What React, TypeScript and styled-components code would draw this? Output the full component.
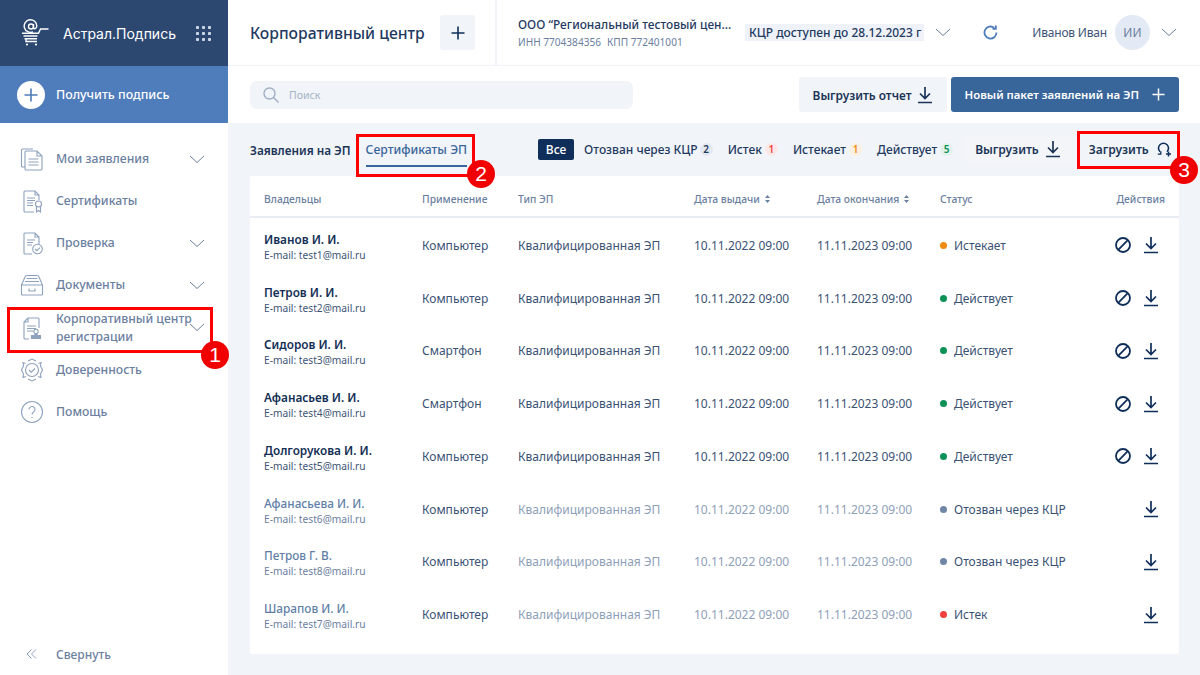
import * as React from 'react'
import styled, {createGlobalStyle} from 'styled-components'

const GlobalStyle = createGlobalStyle`
  html, body {
    margin: 0;
    padding: 0;
    height: 675px;
    overflow: hidden;
    background: #f1f4f9;
    font-family: "Noto Sans", "Open Sans", sans-serif;
    color: #1c3557;
  }
  * { box-sizing: border-box; }
`

const Page = styled.div`
  position: relative;
  display: grid;
  grid-template-columns: 228px 1fr;
  width: 1200px;
  height: 675px;
`

const Sidebar = styled.aside`
  display: flex;
  flex-direction: column;
  background: #fff;
`

const Brand = styled.div`
  display: flex;
  align-items: center;
  height: 66px;
  padding: 0 17px 0 21px;
  background: #2c4770;
  color: #fff;
  font-family: "Inter", sans-serif;
  font-size: 14px;
  span { margin-left: 14px; flex: 1; }
`

const GetButton = styled.div`
  display: flex;
  align-items: center;
  gap: 11px;
  height: 57px;
  padding-left: 17px;
  background: #4f7cba;
  color: #fff;
  font-size: 12.4px;
  font-weight: 500;
`

const PlusCircle = styled.div`
  display: flex;
  align-items: center;
  justify-content: center;
  width: 28px;
  height: 28px;
  border-radius: 50%;
  background: #fff;
  color: #4f7cba;
`

const Nav = styled.nav`
  display: flex;
  flex-direction: column;
  padding-top: 15px;
  flex: 1;
`

const NavItem = styled.div`
  position: relative;
  display: grid;
  grid-template-columns: 24px minmax(0, 1fr) 16px;
  align-items: center;
  column-gap: 12px;
  height: 42.15px;
  padding: 0 23px 0 20px;
  color: #6b80a0;
  font-size: 12.2px;
  font-weight: 500;
  line-height: 18px;
  svg { display: block; }
`

const NavLabel = styled.span`
  white-space: nowrap;
`

const Collapse = styled.div`
  display: flex;
  align-items: center;
  gap: 19px;
  height: 42px;
  padding-left: 26px;
  color: #6b80a0;
  font-size: 12px;
  font-weight: 500;
`

const Main = styled.main`
  display: flex;
  flex-direction: column;
  min-width: 0;
`

const TopBar = styled.header`
  display: flex;
  align-items: center;
  height: 66px;
  padding-left: 22px;
  background: #fff;
  border-bottom: 1px solid #f1f4f8;
`

const PageTitle = styled.h1`
  margin: 0;
  width: 190px;
  color: #1f3a61;
  font-size: 15.7px;
  font-weight: 500;
  white-space: nowrap;
`

const SquareButton = styled.div`
  display: flex;
  align-items: center;
  justify-content: center;
  width: 35px;
  height: 35px;
  border-radius: 3px;
  background: #f1f4f8;
  color: #0f2f5a;
`

const OrgBlock = styled.div`
  display: flex;
  flex-direction: column;
  justify-content: center;
  gap: 3px;
  align-self: stretch;
  width: 250px;
  margin-left: 20px;
  padding-left: 21px;
  border-left: 2px solid #f1f4f8;
`

const OrgName = styled.div`
  color: #1f3a61;
  font-size: 11.9px;
  font-weight: 500;
  white-space: nowrap;
`

const OrgMeta = styled.div`
  display: flex;
  gap: 6px;
  color: #6b80a0;
  font-size: 10.1px;
  white-space: nowrap;
`

const Licence = styled.div`
  display: flex;
  align-items: center;
  height: 17px;
  padding: 0 3px 0 4px;
  background: #eff3f9;
  color: #1f3a61;
  font-size: 12px;
  font-weight: 500;
  white-space: nowrap;
`

const TopChevron = styled.div`
  display: flex;
  margin-left: 11px;
  color: #6b80a0;
`

const Refresh = styled.div`
  display: flex;
  margin-left: 32px;
  color: #4f7cba;
`

const UserName = styled.div`
  margin-left: 34px;
  color: #3d5476;
  font-size: 12px;
  white-space: nowrap;
  letter-spacing: -0.2px;
`

const Avatar = styled.div`
  display: flex;
  align-items: center;
  justify-content: center;
  width: 35px;
  height: 35px;
  margin-left: 8px;
  border-radius: 50%;
  background: #e3eaf5;
  color: #6b80a0;
  font-size: 12px;
`

const Toolbar = styled.div`
  display: flex;
  align-items: center;
  height: 57px;
  padding: 0 21px 0 22px;
  background: #fff;
`

const Search = styled.div`
  display: flex;
  align-items: center;
  gap: 10px;
  width: 383px;
  height: 28px;
  padding-left: 13px;
  border-radius: 7px;
  background: #f1f4f8;
  color: #a5b3c6;
  font-size: 10.5px;
  svg { display: block; }
`

const ToolbarGap = styled.div`
  flex: 1;
`

const ToolButton = styled.div<{$primary?: boolean}>`
  display: flex;
  align-items: center;
  gap: ${p => (p.$primary ? '13px' : '5px')};
  height: 35px;
  margin-left: 4px;
  padding: 0 14px;
  border-radius: 3px;
  background: ${p => (p.$primary ? '#39669a' : '#f1f4f8')};
  color: ${p => (p.$primary ? '#fff' : '#1c3557')};
  font-size: ${p => (p.$primary ? '11.4px' : '11.9px')};
  font-weight: 600;
  white-space: nowrap;
`

const Content = styled.div`
  display: flex;
  flex-direction: column;
  flex: 1;
  padding: 0 21px 21px 22px;
`

const TabsRow = styled.div`
  display: flex;
  align-items: center;
  height: 53px;
`

const Tab = styled.div<{$active?: boolean}>`
  display: flex;
  align-items: center;
  height: 34px;
  margin-right: 15px;
  padding-top: 2px;
  border-bottom: 2px solid ${p => (p.$active ? '#39669a' : 'transparent')};
  color: ${p => (p.$active ? '#39669a' : '#1c3557')};
  font-size: ${p => (p.$active ? '12.2px' : '11.75px')};
  font-weight: ${p => (p.$active ? 500 : 600)};
  white-space: nowrap;
`

const Filters = styled.div`
  display: flex;
  flex: 1;
  align-items: center;
  margin-left: 56px;
  margin-bottom: 1px;
  font-size: 12px;
  font-weight: 500;
  color: #1f3a61;
`

const AllChip = styled.div`
  display: flex;
  align-items: center;
  justify-content: center;
  width: 36px;
  height: 21px;
  border-radius: 2px;
  background: #0f2f5a;
  color: #fff;
  font-size: 12px;
  margin-right: 10px;
`

const Filter = styled.div<{$tight?: boolean}>`
  display: flex;
  align-items: center;
  gap: ${p => (p.$tight ? '2px' : '3px')};
  margin-right: 15px;
  white-space: nowrap;
`

const Count = styled.span<{$bg: string; $fg: string}>`
  display: inline-flex;
  align-items: center;
  justify-content: center;
  width: 13px;
  height: 13px;
  border-radius: 50%;
  background: ${p => p.$bg};
  color: ${p => p.$fg};
  font-size: 10px;
  font-weight: 600;
`

const TabAction = styled.div<{$shaded?: boolean}>`
  display: flex;
  align-items: center;
  gap: ${p => (p.$shaded ? '6px' : '7px')};
  height: 28px;
  margin-left: ${p => (p.$shaded ? '-3px' : '8px')};
  padding: 0 10px;
  border-radius: 3px;
  background: ${p => (p.$shaded ? '#f3f5f9' : 'transparent')};
  color: #1c3557;
  font-size: 12px;
  font-weight: 600;
  white-space: nowrap;
`

const Card = styled.section`
  flex: 1;
  padding: 0 14px;
  background: #fff;
  border-radius: 2px;
`

const Row = styled.div`
  display: grid;
  grid-template-columns: 158px 96px 176px 123px 123px 1fr 50px;
  align-items: center;
  height: 52.75px;
`

const HeadRow = styled(Row)`
  height: 42px;
  margin: 0 -14px 1px;
  padding: 6px 14px 0;
  border-bottom: 2px solid #e8edf4;
`

const HeadCell = styled.div<{$right?: boolean}>`
  display: flex;
  align-items: center;
  gap: 5px;
  color: #6b80a0;
  font-size: 10.3px;
  font-weight: 500;
  white-space: nowrap;
  ${p => (p.$right ? 'justify-content: flex-end;' : '')}
`

const Owner = styled.div<{$muted?: boolean}>`
  display: flex;
  flex-direction: column;
  padding-top: 2px;
  b {
    margin-bottom: 1px;
    color: ${p => (p.$muted ? '#5f7fa6' : '#142f55')};
    font-size: 11.8px;
    font-weight: ${p => (p.$muted ? 500 : 600)};
    line-height: 16px;
  }
  span {
    color: ${p => (p.$muted ? '#6b80a0' : '#3d5476')};
    font-size: 10.2px;
    line-height: 14px;
  }
`

const Cell = styled.div<{$muted?: boolean}>`
  color: ${p => (p.$muted ? '#8ea0b8' : '#3a5274')};
  font-size: 12px;
  white-space: nowrap;
`

const Status = styled.div<{$color: string}>`
  display: flex;
  align-items: center;
  gap: 7px;
  color: #3a5274;
  font-size: 12px;
  white-space: nowrap;
  &::before {
    content: '';
    width: 7px;
    height: 7px;
    border-radius: 50%;
    background: ${p => p.$color};
  }
`

const Actions = styled.div`
  display: flex;
  align-items: center;
  justify-content: flex-end;
  gap: 12px;
  padding-right: 6px;
  color: #0f2f5a;
  svg { display: block; }
`

const Frame = styled.div<{$x: number; $y: number; $w: number; $h: number}>`
  position: absolute;
  left: ${p => p.$x}px;
  top: ${p => p.$y}px;
  width: ${p => p.$w}px;
  height: ${p => p.$h}px;
  border: 3px solid #f00;
  pointer-events: none;
`

const Badge = styled.div<{$x: number; $y: number}>`
  position: absolute;
  left: ${p => p.$x - 14}px;
  top: ${p => p.$y - 14}px;
  display: flex;
  align-items: center;
  justify-content: center;
  width: 28px;
  height: 28px;
  border-radius: 50%;
  background: #f00000;
  color: #fff;
  font-family: "Liberation Sans", sans-serif;
  font-size: 21px;
`

const Chevron = () => (
  <svg width="16" height="9" viewBox="0 0 16 9" fill="none" stroke="currentColor" strokeWidth="1">
    <path d="M1 1l7 6.5L15 1" />
  </svg>
)

const Plus = ({size = 14, w = 1.6}: {size?: number; w?: number}) => (
  <svg width={size} height={size} viewBox="0 0 14 14" fill="none" stroke="currentColor" strokeWidth={w}>
    <path d="M7 0.5v13M0.5 7h13" />
  </svg>
)

const Download = () => (
  <svg width="16" height="18" viewBox="0 0 16 18" fill="none" stroke="currentColor" strokeWidth="1.7">
    <path d="M8 1v11M3 7.5l5 5 5-5M1 16.5h14" />
  </svg>
)

const Ban = () => (
  <svg width="16" height="16" viewBox="0 0 16 16" fill="none" stroke="currentColor" strokeWidth="1.8">
    <circle cx="8" cy="8" r="7" />
    <path d="M3.2 12.8L12.8 3.2" />
  </svg>
)

const Sort = () => (
  <svg width="5" height="8" viewBox="0 0 5 8" fill="#6b80a0">
    <path d="M2.5 0L5 3H0zM2.5 8L0 5h5z" />
  </svg>
)

const Upload = () => (
  <svg width="16" height="16" viewBox="0 0 16 16" fill="none" stroke="#0f2f5a" strokeWidth="1.6">
    <path d="M4 10.8A5 5 0 1 1 11 10.800" />
    <path d="M1.800 13.200h3v-3" strokeWidth="1.300" />
    <path d="M12.500 10.500v5M10 13h5" strokeWidth="1.500" />
  </svg>
)

const iconProps = {
  width: 24,
  height: 24,
  viewBox: '0 0 24 24',
  fill: 'none',
  stroke: '#8ea2bd',
  strokeWidth: 1.1,
}

const DocsIcon = () => (
  <svg {...iconProps}>
    <path d="M5 20H2.500A1 1 0 0 1 1.500 19V3a1 1 0 0 1 1-1H13" />
    <path d="M5 5a1 1 0 0 1 1-1h11l5 5V22a1 1 0 0 1-1 1H6a1 1 0 0 1-1-1zM17 4v5h5" />
    <path d="M8.500 12h10M8.500 15h10M8.500 18h10" />
  </svg>
)

const CertIcon = () => (
  <svg {...iconProps}>
    <path d="M14 23H5a1 1 0 0 1-1-1V3a1 1 0 0 1 1-1h10l4 4v5M15 2v4h4" />
    <path d="M7 9h8M7 11.500h8M7 14h6M7 16.500h6" />
    <circle cx="18.500" cy="15" r="3" />
    <path d="M16.500 18v5l2-1.500 2 1.500v-5" />
  </svg>
)

const CheckDocIcon = () => (
  <svg {...iconProps}>
    <path d="M12 23H5a1 1 0 0 1-1-1V3a1 1 0 0 1 1-1h10l4 4v7M15 2v4h4" />
    <path d="M7 9h8M7 11.500h6M7 14h5" />
    <circle cx="17.500" cy="18" r="4.800" />
    <path d="M15.200 18l1.700 1.700 3-3" />
  </svg>
)

const TrayIcon = () => (
  <svg {...iconProps}>
    <path d="M1.500 12L5 4a2 2 0 0 1 2-1.500h10A2 2 0 0 1 19 4l3.500 8v9a1 1 0 0 1-1 1h-19a1 1 0 0 1-1-1z" />
    <path d="M1.500 12h21M5 8.500h14M6.500 5.500h11M9 15.500v2.500h6v-2.500" />
  </svg>
)

const StampIcon = () => (
  <svg {...iconProps}>
    <path d="M9 23H5a1 1 0 0 1-1-1V6l4-4h10a1 1 0 0 1 1 1v9M8 2v4H4" />
    <path d="M7 10h9M7 12.500h9M7 15h6" />
    <circle cx="16" cy="15.500" r="2.200" />
    <path d="M15 17.500v2h-3.500v3h9v-3H17v-2" fill="#8ea2bd" />
  </svg>
)

const TrustIcon = () => (
  <svg {...iconProps}>
    <circle cx="12" cy="12" r="6.500" />
    <path d="M9 12l2.200 2.200L15 10.500" />
    <path d="M5.500 5.500L3 4.500l.5 3.500L1.500 12l2 4-.5 3.500 3-1M18.500 5.500L21 4.500l-.5 3.500 2 4-2 4 .5 3.500-3-1M8 3l4-2 4 2M8 21l4 2 4-2" />
  </svg>
)

const HelpIcon = () => (
  <svg {...iconProps}>
    <circle cx="12" cy="12" r="10.500" />
    <path d="M9 9.500a3 3 0 1 1 4.600 2.500c-1 .7-1.600 1.200-1.600 2.500" />
    <circle cx="12" cy="17.500" r="0.700" fill="#8ea2bd" stroke="none" />
  </svg>
)

const CartLogo = () => (
  <svg width="28" height="28" viewBox="0 0 28 28" fill="none" stroke="#fff" strokeWidth="1.400">
    <circle cx="10" cy="7.500" r="2.500" />
    <path d="M12.500 5v3.500c0 2.200 3.300 1.500 3.300-1.500A6.300 6.300 0 1 0 12 12.800" />
    <path d="M1 14.200h16.500L19.500 10h8M2.500 17h14M3.500 19.800h12.500" />
    <path d="M5 20v2.500h11" />
    <circle cx="6" cy="25.500" r="1.100" fill="#fff" stroke="none" />
    <circle cx="15" cy="25.500" r="1.100" fill="#fff" stroke="none" />
  </svg>
)

const AppsGrid = () => (
  <svg width="15" height="15" viewBox="0 0 15 15" fill="#cdd7e6">
    {[1.5, 7.5, 13.5].map(y =>
      [1.5, 7.5, 13.5].map(x => <rect key={`${x}-${y}`} x={x - 1.5} y={y - 1.5} width="3" height="3" rx="0.800" />),
    )}
  </svg>
)

const navItems = [
  {label: 'Мои заявления', icon: <DocsIcon />, arrow: true},
  {label: 'Сертификаты', icon: <CertIcon />},
  {label: 'Проверка', icon: <CheckDocIcon />, arrow: true},
  {label: 'Документы', icon: <TrayIcon />, arrow: true},
  {label: <>Корпоративный центр<br />регистрации</>, icon: <StampIcon />, arrow: true},
  {label: 'Доверенность', icon: <TrustIcon />},
  {label: 'Помощь', icon: <HelpIcon />},
]

const statusColors: Record<string, string> = {
  'Истекает': '#f08a12',
  'Действует': '#0e9157',
  'Отозван через КЦР': '#6f86a6',
  'Истек': '#f0413e',
}

const rows = [
  {name: 'Иванов И. И.', mail: 'test1@mail.ru', use: 'Компьютер', status: 'Истекает'},
  {name: 'Петров И. И.', mail: 'test2@mail.ru', use: 'Компьютер', status: 'Действует'},
  {name: 'Сидоров И. И.', mail: 'test3@mail.ru', use: 'Смартфон', status: 'Действует'},
  {name: 'Афанасьев И. И.', mail: 'test4@mail.ru', use: 'Смартфон', status: 'Действует'},
  {name: 'Долгорукова И. И.', mail: 'test5@mail.ru', use: 'Компьютер', status: 'Действует'},
  {name: 'Афанасьева И. И.', mail: 'test6@mail.ru', use: 'Компьютер', status: 'Отозван через КЦР', muted: true},
  {name: 'Петров Г. В.', mail: 'test8@mail.ru', use: 'Компьютер', status: 'Отозван через КЦР', muted: true},
  {name: 'Шарапов И. И.', mail: 'test7@mail.ru', use: 'Компьютер', status: 'Истек', muted: true},
]

const App = () => (
  <Page>
    <GlobalStyle />
    <Sidebar>
      <Brand>
        <CartLogo />
        <span>Астрал.Подпись</span>
        <AppsGrid />
      </Brand>
      <GetButton>
        <PlusCircle><Plus /></PlusCircle>
        Получить подпись
      </GetButton>
      <Nav>
        {navItems.map((item, i) => (
          <NavItem key={i}>
            {item.icon}
            <NavLabel>{item.label}</NavLabel>
            {item.arrow ? <Chevron /> : <i />}
          </NavItem>
        ))}
      </Nav>
      <Collapse>
        <svg width="11" height="10" viewBox="0 0 11 10" fill="none" stroke="#8ea2bd" strokeWidth="1">
          <path d="M5.500 0.500L1 5l4.500 4.500M10 0.500L5.500 5l4.500 4.500" />
        </svg>
        Свернуть
      </Collapse>
    </Sidebar>
    <Main>
      <TopBar>
        <PageTitle>Корпоративный центр</PageTitle>
        <SquareButton><Plus /></SquareButton>
        <OrgBlock>
          <OrgName>ООО “Региональный тестовый цен...</OrgName>
          <OrgMeta><span>ИНН 7704384356</span><span>КПП 772401001</span></OrgMeta>
        </OrgBlock>
        <Licence>КЦР доступен до 28.12.2023 г</Licence>
        <TopChevron><Chevron /></TopChevron>
        <Refresh>
          <svg width="15" height="15" viewBox="0 0 15 15" fill="none" stroke="currentColor" strokeWidth="1.800">
            <path d="M13.500 7.500a6 6 0 1 1-2.200-4.600" />
            <path d="M12.800 0.500v3.300H9.500" />
          </svg>
        </Refresh>
        <UserName>Иванов Иван</UserName>
        <Avatar>ИИ</Avatar>
        <TopChevron><Chevron /></TopChevron>
      </TopBar>
      <Toolbar>
        <Search>
          <svg width="16" height="16" viewBox="0 0 16 16" fill="none" stroke="#9fb0c4" strokeWidth="1.400">
            <circle cx="6.500" cy="6.500" r="5.500" />
            <path d="M10.500 10.500l5 5" />
          </svg>
          Поиск
        </Search>
        <ToolbarGap />
        <ToolButton>Выгрузить отчет <Download /></ToolButton>
        <ToolButton $primary>Новый пакет заявлений на ЭП <Plus size={13} /></ToolButton>
      </Toolbar>
      <Content>
        <TabsRow>
          <Tab>Заявления на ЭП</Tab>
          <Tab $active>Сертификаты ЭП</Tab>
          <Filters>
            <AllChip>Все</AllChip>
            <Filter $tight>Отозван через КЦР <Count $bg="#e3e8ef" $fg="#1f3a61">2</Count></Filter>
            <Filter>Истек <Count $bg="#fde8e8" $fg="#f0413e">1</Count></Filter>
            <Filter>Истекает <Count $bg="#fdf0e0" $fg="#f08a12">1</Count></Filter>
            <Filter>Действует <Count $bg="#e2f2ea" $fg="#0e9157">5</Count></Filter>
            <TabAction $shaded>Выгрузить <Download /></TabAction>
            <TabAction>Загрузить <Upload /></TabAction>
          </Filters>
        </TabsRow>
        <Card>
          <HeadRow>
            <HeadCell>Владельцы</HeadCell>
            <HeadCell>Применение</HeadCell>
            <HeadCell>Тип ЭП</HeadCell>
            <HeadCell>Дата выдачи <Sort /></HeadCell>
            <HeadCell>Дата окончания <Sort /></HeadCell>
            <HeadCell>Статус</HeadCell>
            <HeadCell $right>Действия</HeadCell>
          </HeadRow>
          {rows.map(r => (
            <Row key={r.mail}>
              <Owner $muted={r.muted}>
                <b>{r.name}</b>
                <span>E-mail: {r.mail}</span>
              </Owner>
              <Cell>{r.use}</Cell>
              <Cell $muted={r.muted}>Квалифицированная ЭП</Cell>
              <Cell $muted={r.muted}>10.11.2022 09:00</Cell>
              <Cell $muted={r.muted}>11.11.2023 09:00</Cell>
              <Status $color={statusColors[r.status]}>{r.status}</Status>
              <Actions>
                {!r.muted && <Ban />}
                <Download />
              </Actions>
            </Row>
          ))}
        </Card>
      </Content>
    </Main>
    <Frame $x={7} $y={307} $w={206} $h={46} />
    <Badge $x={215} $y={355}>1</Badge>
    <Frame $x={356} $y={134} $w={119} $h={43} />
    <Badge $x={481} $y={174}>2</Badge>
    <Frame $x={1077} $y={131} $w={103} $h={38} />
    <Badge $x={1184} $y={170}>3</Badge>
  </Page>
)

export default App
